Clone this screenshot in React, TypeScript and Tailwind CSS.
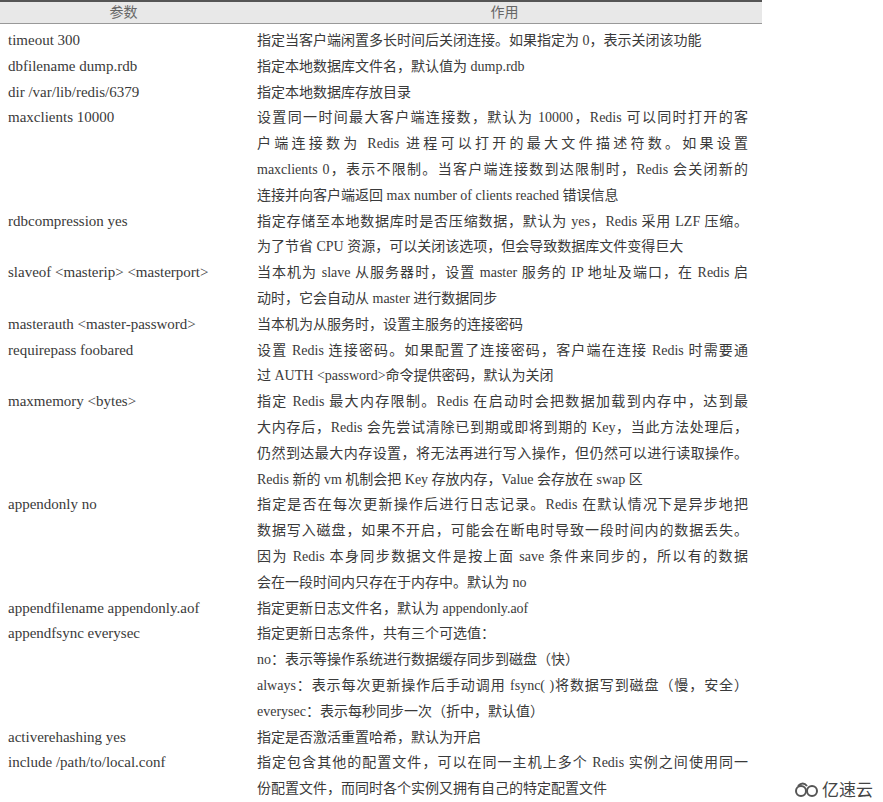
import React from "react";

type Row = { k: string; lines: [string, boolean][] };
const J = true, N = false;
const rows: Row[] = [
  { k: "timeout 300", lines: [["指定当客户端闲置多长时间后关闭连接。如果指定为 0，表示关闭该功能", N]] },
  { k: "dbfilename dump.rdb", lines: [["指定本地数据库文件名，默认值为 dump.rdb", N]] },
  { k: "dir /var/lib/redis/6379", lines: [["指定本地数据库存放目录", N]] },
  { k: "maxclients 10000", lines: [
    ["设置同一时间最大客户端连接数，默认为 10000，Redis 可以同时打开的客", J],
    ["户端连接数为 Redis 进程可以打开的最大文件描述符数。如果设置", J],
    ["maxclients 0，表示不限制。当客户端连接数到达限制时，Redis 会关闭新的", J],
    ["连接并向客户端返回 max number of clients reached 错误信息", N]] },
  { k: "rdbcompression yes", lines: [
    ["指定存储至本地数据库时是否压缩数据，默认为 yes，Redis 采用 LZF 压缩。", J],
    ["为了节省 CPU 资源，可以关闭该选项，但会导致数据库文件变得巨大", N]] },
  { k: "slaveof <masterip> <masterport>", lines: [
    ["当本机为 slave 从服务器时，设置 master 服务的 IP 地址及端口，在 Redis 启", J],
    ["动时，它会自动从 master 进行数据同步", N]] },
  { k: "masterauth <master-password>", lines: [["当本机为从服务时，设置主服务的连接密码", N]] },
  { k: "requirepass foobared", lines: [
    ["设置 Redis 连接密码。如果配置了连接密码，客户端在连接 Redis 时需要通", J],
    ["过 AUTH <password>命令提供密码，默认为关闭", N]] },
  { k: "maxmemory <bytes>", lines: [
    ["指定 Redis 最大内存限制。Redis 在启动时会把数据加载到内存中，达到最", J],
    ["大内存后，Redis 会先尝试清除已到期或即将到期的 Key，当此方法处理后，", J],
    ["仍然到达最大内存设置，将无法再进行写入操作，但仍然可以进行读取操作。", J],
    ["Redis 新的 vm 机制会把 Key 存放内存，Value 会存放在 swap 区", N]] },
  { k: "appendonly no", lines: [
    ["指定是否在每次更新操作后进行日志记录。Redis 在默认情况下是异步地把", J],
    ["数据写入磁盘，如果不开启，可能会在断电时导致一段时间内的数据丢失。", J],
    ["因为 Redis 本身同步数据文件是按上面 save 条件来同步的，所以有的数据", J],
    ["会在一段时间内只存在于内存中。默认为 no", N]] },
  { k: "appendfilename appendonly.aof", lines: [["指定更新日志文件名，默认为 appendonly.aof", N]] },
  { k: "appendfsync everysec", lines: [
    ["指定更新日志条件，共有三个可选值：", N],
    ["no：表示等操作系统进行数据缓存同步到磁盘（快）", N],
    ["always：表示每次更新操作后手动调用 fsync( )将数据写到磁盘（慢，安全）", J],
    ["everysec：表示每秒同步一次（折中，默认值）", N]] },
  { k: "activerehashing yes", lines: [["指定是否激活重置哈希，默认为开启", N]] },
  { k: "include /path/to/local.conf", lines: [
    ["指定包含其他的配置文件，可以在同一主机上多个 Redis 实例之间使用同一", J],
    ["份配置文件，而同时各个实例又拥有自己的特定配置文件", N]] },
];

export default function App() {
  return (
    <div className="relative w-[883px] h-[802px] bg-white text-[#3a3a3a] text-[14px]" style={{ fontFamily: '"Liberation Serif", "Noto Sans CJK SC", serif' }}>
      <div className="w-[762px]">
        <div className="flex h-[24px] items-center bg-[#e8e8e8] border-t-2 border-t-[#555] border-b border-b-[#999] text-[#666]">
          <div className="w-[247px] text-center">参数</div>
          <div className="flex-1 text-center">作用</div>
        </div>
        <div className="pt-[4px] leading-[25.8px]">
          {rows.map((r) => (
            <div key={r.k} className="flex">
              <div className="w-[257px] pl-[8px] shrink-0 text-[15px]">{r.k}</div>
              <div className="w-[491px]">
                {r.lines.map(([t, j], i) => (
                  <div key={i} className={j ? "text-justify [text-align-last:justify]" : ""}>{t}</div>
                ))}
              </div>
            </div>
          ))}
        </div>
      </div>
      <div className="absolute left-[794px] top-[776px] flex items-center gap-[2px] text-[#444] text-[17px]" style={{ fontFamily: '"Noto Sans CJK SC", sans-serif' }}>
        <svg width="26" height="18" viewBox="0 0 26 18" fill="none" stroke="#555" strokeWidth="2">
          <circle cx="7" cy="11" r="5" />
          <circle cx="18" cy="11" r="5" />
          <path d="M4 6 Q9 1 13 6" />
        </svg>
        <span>亿速云</span>
      </div>
    </div>
  );
}
